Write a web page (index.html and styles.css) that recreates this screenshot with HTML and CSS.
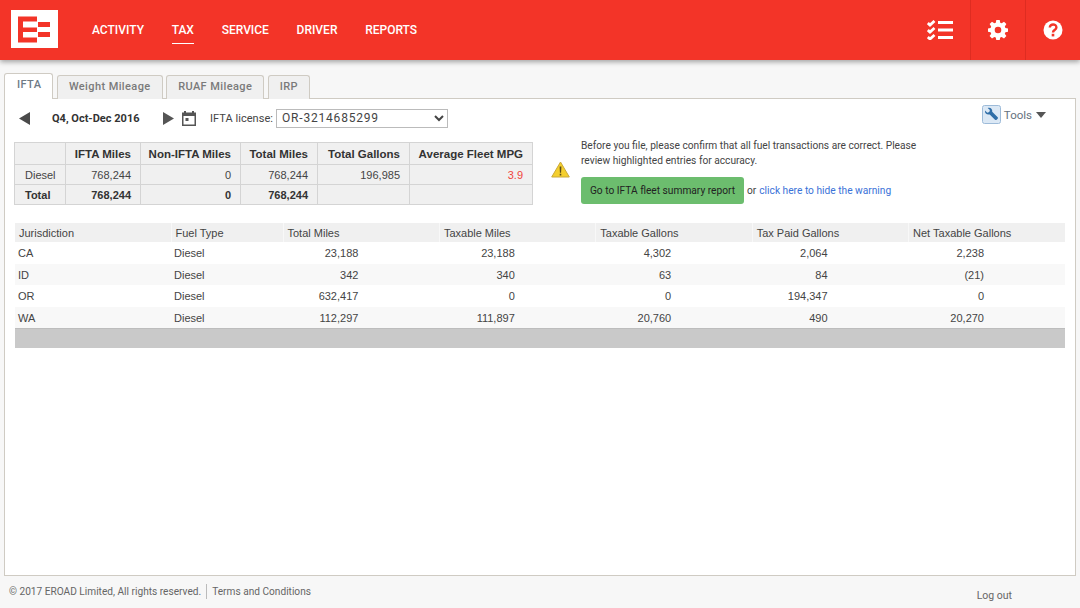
FILE: index.html
```html
<!DOCTYPE html>
<html lang="en">
<head>
<meta charset="utf-8">
<title>IFTA</title>
<link rel="stylesheet" href="styles.css">
</head>
<body>
<header class="topbar">
  <div class="logo">
    <svg width="47" height="38" viewBox="0 0 47 38"><path fill="#f33428" d="M7 6.500h19v5H12v6h14v4.500H12v5.500h14v5H7zM27 12h12v5H27zM27 22h12v5H27z"/></svg>
  </div>
  <nav class="mainnav">
    <a class="navitem">ACTIVITY</a>
    <a class="navitem active">TAX</a>
    <a class="navitem">SERVICE</a>
    <a class="navitem">DRIVER</a>
    <a class="navitem">REPORTS</a>
  </nav>
  <div class="tools">
    <div class="toolbtn first">
      <svg class="listicon" width="27" height="20" viewBox="0 0 27 20" fill="none" stroke="#fff"><path stroke-width="2.800" d="M.8 3l2.200 2 4.500-4M.8 10l2.200 2 4.500-4M.8 17l2.200 2 4.500-4"/><path stroke-width="3" d="M11 2.500h15M11 10h15M11 17.500h15"/></svg>
    </div>
    <div class="toolbtn">
      <svg width="20" height="20" viewBox="0 0 20 20"><path fill="#fff" fill-rule="evenodd" d="M8.300 0h3.400l.5 2.700 1.500.6 2.300-1.600 2.400 2.400-1.600 2.300.6 1.500 2.600.5v3.400l-2.600.5-.6 1.500 1.600 2.300-2.400 2.400-2.300-1.600-1.500.6-.5 2.700H8.300l-.5-2.700-1.500-.6L4 18.500l-2.400-2.400 1.600-2.300-.6-1.500L0 11.800V8.400l2.600-.5.6-1.500-1.600-2.300L4 1.700l2.300 1.600 1.500-.6zM10 6.700a3.300 3.300 0 1 0 0 6.600 3.300 3.300 0 0 0 0-6.600z"/></svg>
    </div>
    <div class="toolbtn">
      <svg width="20" height="20" viewBox="0 0 20 20"><circle cx="10" cy="10" r="9.500" fill="#fff"/><path fill="none" stroke="#f33428" stroke-width="2.400" d="M6.800 7.600c0-4.300 6.600-4.100 6.600-.2 0 2.600-3.400 2.600-3.400 5"/><rect x="8.700" y="13.800" width="2.600" height="2.600" fill="#f33428"/></svg>
    </div>
  </div>
</header>

<main class="content">
  <div class="tabs">
    <a class="tab selected">IFTA</a>
    <a class="tab">Weight Mileage</a>
    <a class="tab">RUAF Mileage</a>
    <a class="tab">IRP</a>
  </div>
  <section class="panel">
    <div class="controls">
      <svg class="arrow" width="11" height="13" viewBox="0 0 11 13"><path fill="#4a4a4a" d="M11 0v13L0 6.500z"/></svg>
      <span class="quarter">Q4, Oct-Dec 2016</span>
      <svg class="arrow next" width="11" height="13" viewBox="0 0 11 13"><path fill="#555" d="M0 0v13l11-6.500z"/></svg>
      <svg class="calendar" width="14" height="15" viewBox="0 0 14 15"><path fill="#555" fill-rule="evenodd" d="M2 0h2v1.500h6V0h2v1.500h2V15H0V1.500h2zM1.500 5v8.500h11V5z"/><rect x="3.500" y="7" width="3" height="3" fill="#555"/></svg>
      <label class="license">IFTA license:</label>
      <select class="licsel"><option>OR-3214685299</option></select>
      <div class="toolsmenu">
        <svg width="19" height="19" viewBox="0 0 19 19"><rect x=".5" y=".5" width="18" height="18" rx="2" fill="#dbe8f5" stroke="#9dbbd9"/><path fill="#2f6ea8" d="M3 5.500l2.300 2.200 2-.6.6-2L5.700 3c3-.8 5 1.300 4.500 3.800l5.500 5.500c1 1-1.400 3.600-2.700 2.500L7.700 9.400C5 10 2.500 8.300 3 5.500z"/></svg>
        <span class="toolslabel">Tools</span>
        <svg width="10" height="6" viewBox="0 0 10 6"><path fill="#555" d="M0 0h10L5 6z"/></svg>
      </div>
    </div>

    <div class="summaryrow">
      <table class="summary">
        <colgroup><col class="s1"><col class="s2"><col class="s3"><col class="s4"><col class="s5"><col class="s6"></colgroup>
        <tr><th></th><th>IFTA Miles</th><th>Non-IFTA Miles</th><th>Total Miles</th><th>Total Gallons</th><th>Average Fleet MPG</th></tr>
        <tr><td class="lbl">Diesel</td><td>768,244</td><td>0</td><td>768,244</td><td>196,985</td><td class="alert">3.9</td></tr>
        <tr class="total"><td class="lbl">Total</td><td>768,244</td><td>0</td><td>768,244</td><td></td><td></td></tr>
      </table>
      <svg class="warnicon" width="19" height="17" viewBox="0 0 19 17"><path fill="#f4cf2e" stroke="#c9a83a" d="M9.500 1L18.300 16H.7z"/><path fill="#5a4a1a" d="M8.600 5.500h1.800l-.3 6.200H8.900zM8.700 12.800h1.600v1.700H8.700z"/></svg>
      <div class="notice">
        <p class="noticetext">Before you file, please confirm that all fuel transactions are correct. Please review highlighted entries for accuracy.</p>
        <div class="noticeactions">
          <a class="gobtn">Go to IFTA fleet summary report</a>
          <span class="or">or</span>
          <a class="hidelink">click here to hide the warning</a>
        </div>
      </div>
    </div>

    <table class="grid">
      <thead>
        <tr><th class="c1">Jurisdiction</th><th class="c2">Fuel Type</th><th>Total Miles</th><th>Taxable Miles</th><th>Taxable Gallons</th><th>Tax Paid Gallons</th><th>Net Taxable Gallons</th></tr>
      </thead>
      <tbody>
        <tr><td class="txt">CA</td><td class="txt">Diesel</td><td>23,188</td><td>23,188</td><td>4,302</td><td>2,064</td><td>2,238</td></tr>
        <tr class="alt"><td class="txt">ID</td><td class="txt">Diesel</td><td>342</td><td>340</td><td>63</td><td>84</td><td>(21)</td></tr>
        <tr><td class="txt">OR</td><td class="txt">Diesel</td><td>632,417</td><td>0</td><td>0</td><td>194,347</td><td>0</td></tr>
        <tr class="alt"><td class="txt">WA</td><td class="txt">Diesel</td><td>112,297</td><td>111,897</td><td>20,760</td><td>490</td><td>20,270</td></tr>
      </tbody>
    </table>
    <div class="gridfoot"></div>
  </section>
</main>

<footer class="footer">
  <div class="legal"><span class="copy">© 2017 EROAD Limited, All rights reserved.</span><a class="terms">Terms and Conditions</a></div>
  <a class="logout">Log out</a>
</footer>
</body>
</html>
```
FILE: styles.css
```css
* { box-sizing: border-box; }
html, body { margin: 0; padding: 0; }
body {
  width: 1080px;
  height: 608px;
  overflow: hidden;
  background: #f7f7f7;
  font-family: Roboto, "Liberation Sans", sans-serif;
  color: #444;
  display: flex;
  flex-direction: column;
}

/* header */
.topbar {
  height: 60px;
  flex: none;
  background: #f33428;
  box-shadow: 0 2px 5px rgba(0,0,0,.35);
  display: flex;
  align-items: center;
  padding-left: 11px;
  position: relative;
}
.logo {
  width: 47px;
  height: 38px;
  margin-top: -3px;
  background: #fff;
  line-height: 0;
}
.mainnav { display: flex; gap: 27.700px; margin-left: 34px; margin-top: -1px; }
.navitem {
  color: #fff;
  font-size: 12px;
  font-weight: 500;
  line-height: 16px;
  padding: 6px 0 5px;
  border-bottom: 1px solid transparent;
}
.navitem.active { border-bottom-color: #fff; }
.tools { margin-left: auto; display: flex; height: 60px; }
.toolbtn {
  width: 55px;
  border-left: 1px solid #de2c21;
  display: flex;
  align-items: center;
  justify-content: center;
}
.toolbtn.first { width: 56px; border-left: 0; }
.listicon { margin-right: 3px; }

/* tabs */
.content { flex: none; padding: 13px 4px 0; }
.tabs { display: flex; gap: 3.500px; height: 26px; align-items: flex-end; position: relative; z-index: 1; margin-bottom: -1px; }
.tab {
  height: 24px;
  padding: 0 11px;
  background: #f0f0f0;
  border: 1px solid #cfcbc3;
  border-bottom: 0;
  border-radius: 3px 3px 0 0;
  font-size: 11px;
  letter-spacing: .4px;
  line-height: 22px;
  color: #7a7a7a;
  font-weight: 500;
}
.tab.selected {
  height: 26px;
  padding: 0 11px 0 12px;
  background: #fff;
  color: #6e7a86;
  line-height: 21px;
}

.panel {
  width: 1072px;
  height: 478px;
  background: #fff;
  border: 1px solid #cfcbc3;
  padding: 0 10px;
}

/* controls */
.controls { display: flex; align-items: center; height: 38px; padding-left: 4px; }
.arrow { flex: none; }
.quarter { font-size: 11px; font-weight: 700; color: #333; margin-left: 22px; width: 111px; }
.arrow.next { margin-left: 0; }
.calendar { margin-left: 8px; }
.license { font-size: 11px; color: #444; margin-left: 14px; letter-spacing: .05px; }
.licsel {
  width: 172px;
  height: 19px;
  margin-left: 3px;
  background: #fff;
  border: 1px solid #bbb;
  font-family: Roboto, sans-serif;
  font-size: 12px;
  letter-spacing: .8px;
  color: #444;
  padding: 0 0 0 1px;
}
.toolsmenu { margin-left: auto; margin-right: 19px; margin-top: -7px; display: flex; align-items: center; gap: 3px; }
.toolslabel { font-size: 11.500px; color: #66727e; margin-right: 1px; }

/* summary */
.summaryrow { display: flex; align-items: flex-start; height: 81px; margin-top: 5px; margin-left: -1px; }
.summary {
  border-collapse: collapse;
  table-layout: fixed;
  width: 518px;
  font-family: "Liberation Sans", sans-serif;
  font-size: 11px;
  background: #f0f0f0;
  color: #444;
}
.s1 { width: 51px; } .s2 { width: 75px; } .s3 { width: 100px; }
.s4 { width: 77px; } .s5 { width: 92px; } .s6 { width: 123px; }
.summary th, .summary td {
  border: 1px solid #d4d4d4;
  height: 20px;
  padding: 0 9px 0 3px;
  text-align: right;
}
.summary th { height: 22px; color: #333; font-size: 11.500px; }
.summary .lbl { text-align: left; padding-left: 10px; padding-right: 0; }
.summary .total td { font-weight: 700; color: #333; }
.summary .alert { color: #f0453c; }
.warnicon { flex: none; margin: 19px 0 0 18px; }
.notice { margin-left: 11px; margin-top: -4px; width: 345px; }
.noticetext { margin: 0; font-size: 10.200px; line-height: 15px; color: #444; }
.noticeactions { display: flex; align-items: center; margin-top: 9px; font-size: 10.200px; }
.gobtn {
  display: block;
  width: 163px;
  height: 27px;
  background: #6cbd6e;
  border-radius: 3px;
  text-align: center;
  line-height: 27px;
  color: #222;
  white-space: nowrap;
}
.or { margin-left: 3px; }
.hidelink { margin-left: 3px; color: #3a72d8; }

/* grid */
.grid {
  border-collapse: collapse;
  table-layout: fixed;
  width: 1050px;
  margin-top: 0;
  font-family: "Liberation Sans", sans-serif;
  font-size: 11px;
  color: #444;
}
.grid th {
  background: #f0f0f0;
  height: 19px;
  font-weight: 400;
  text-align: left;
  padding: 0 0 0 4px;
  border-left: 1px solid #f8f8f8;
}
.grid th.c1 { width: 156px; border-left: 0; }
.grid th.c2 { width: 112px; }
.grid td { height: 21.500px; text-align: right; padding: 1px 81px 0 0; }
.grid td.txt { text-align: left; padding: 1px 0 0 3px; }
.grid .alt td { background: #f8f8f8; }
.gridfoot { width: 1050px; height: 20px; background: #c9c9c9; border-top: 1px solid #bdbdbd; }

/* footer */
.footer {
  flex: 1;
  display: flex;
  justify-content: space-between;
  padding: 8px 68px 0 9px;
  font-size: 10.150px;
  color: #666;
}
.legal { display: flex; align-items: flex-start; line-height: 15px; }
.copy { padding-right: 5px; border-right: 1px solid #bbb; margin-right: 5px; }
.logout { margin-top: 5px; line-height: 14px; font-size: 10.500px; }
```
